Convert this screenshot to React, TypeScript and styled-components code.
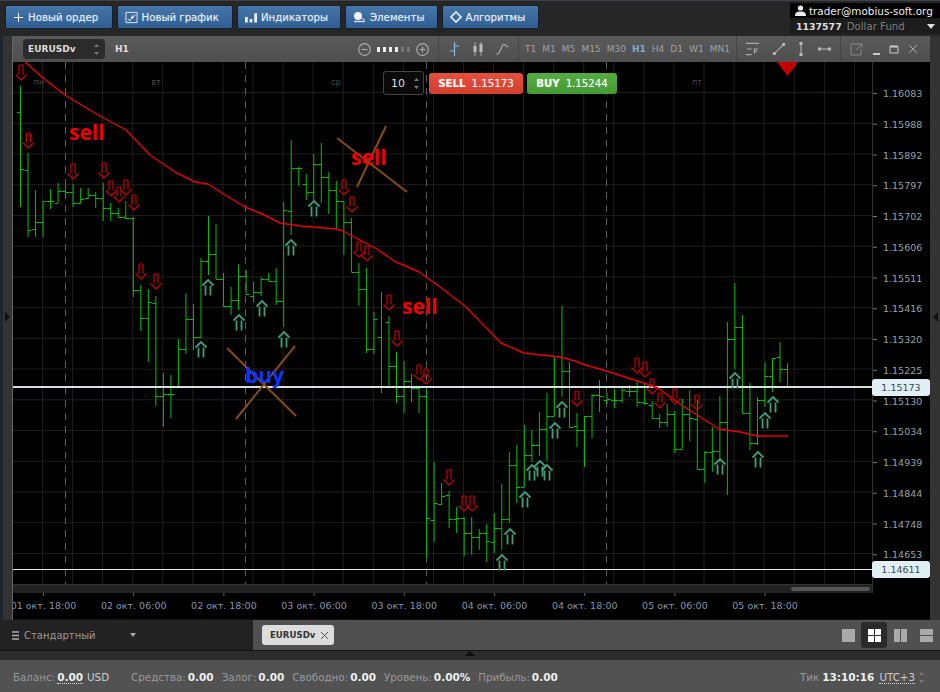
import styled, { createGlobalStyle } from 'styled-components';

const GlobalStyle = createGlobalStyle`
  html, body { margin: 0; padding: 0; background: #2a2a2a; }
  body { font-family: 'DejaVu Sans', Verdana, sans-serif; }
`;

// high, low, open, close in page pixels, one bar per hour
const BARS: [number, number, number, number][] = [
  [86, 207, 112, 169], [153, 237, 170, 230], [190, 237, 229, 222], [201, 237, 222, 201],
  [189, 209, 201, 201], [183, 203, 203, 191], [186, 198, 191, 192], [184, 207, 192, 203],
  [188, 204, 203, 199], [188, 199, 198, 195], [192, 208, 195, 198], [183, 221, 198, 208],
  [203, 221, 208, 213], [208, 217, 213, 217], [201, 219, 217, 218], [217, 297, 218, 290],
  [285, 331, 290, 318], [289, 362, 318, 302], [296, 406, 303, 396], [373, 427, 396, 394],
  [375, 418, 394, 394], [339, 387, 387, 349], [293, 354, 349, 319], [304, 350, 319, 337],
  [258, 337, 337, 261], [216, 275, 261, 254], [224, 279, 254, 279], [273, 307, 279, 306],
  [287, 315, 306, 300], [264, 310, 300, 276], [270, 295, 276, 294], [282, 302, 296, 292],
  [277, 296, 292, 279], [273, 281, 279, 281], [268, 305, 281, 301], [202, 327, 301, 210],
  [140, 235, 211, 168], [167, 186, 168, 168], [174, 200, 184, 192], [154, 202, 192, 164],
  [143, 203, 164, 177], [172, 214, 177, 190], [181, 229, 190, 201], [201, 255, 201, 222],
  [218, 272, 222, 272], [263, 306, 272, 289], [268, 353, 289, 349], [312, 354, 349, 319],
  [292, 393, 337, 386], [316, 387, 322, 366], [352, 403, 366, 396], [361, 413, 396, 381],
  [374, 402, 381, 388], [387, 413, 388, 396], [389, 558, 396, 518], [462, 542, 520, 503],
  [483, 505, 504, 496], [491, 528, 495, 519], [507, 533, 519, 518], [517, 556, 518, 533],
  [517, 555, 533, 537], [529, 550, 537, 533], [524, 562, 533, 541], [513, 553, 542, 528],
  [484, 550, 528, 519], [452, 523, 519, 465], [445, 503, 465, 487], [425, 487, 487, 455],
  [430, 462, 455, 445], [412, 456, 445, 429], [393, 461, 429, 416], [357, 416, 416, 386],
  [306, 397, 386, 371], [362, 427, 371, 427], [413, 447, 426, 430], [416, 467, 430, 416],
  [394, 438, 416, 395], [380, 412, 395, 396], [393, 404, 400, 399], [389, 408, 400, 400],
  [388, 403, 400, 390], [385, 397, 391, 391], [381, 407, 391, 402], [383, 405, 402, 403],
  [401, 418, 405, 418], [414, 428, 418, 422], [404, 427, 422, 414], [411, 453, 414, 449],
  [399, 449, 449, 414], [390, 441, 414, 418], [400, 469, 419, 469], [451, 483, 469, 452],
  [427, 472, 452, 451], [396, 462, 451, 422], [322, 495, 422, 339], [283, 369, 339, 327],
  [315, 413, 327, 413], [383, 450, 413, 443], [397, 445, 443, 400], [362, 407, 400, 376],
  [358, 392, 376, 358], [342, 382, 357, 369], [363, 387, 369, 387],
];

// x, y of the arrow tip
const SELL_ARROWS = [
  [21, 80], [28.5, 148], [73, 179], [104, 178], [111, 196], [119, 202], [126, 195], [134, 210],
  [141, 279], [156, 289], [344, 195], [352, 212], [359, 257], [367, 261], [389, 310], [397, 346],
  [419, 380], [426, 384], [449, 485], [464, 511], [472, 511], [577, 406], [637, 373], [645, 377],
  [652, 394], [660, 408], [675, 404], [697, 410],
];
const BUY_ARROWS = [
  [201, 342], [208, 280], [239, 315], [262, 301], [284, 332], [291, 240], [314, 201], [502, 555],
  [510, 529], [525, 492], [532, 465], [540, 461], [547, 465], [555, 423], [562, 402], [720, 459],
  [735, 373], [758, 452], [765, 413], [773, 397],
];

const MA_LINE =
  '25,62 43,78 65,95 73,100 100,116 126,130 150,155 175,172 195,182 208,184 225,195 245,207 262,214 280,223 300,226 336,229 343,231 375,248 396,262 419,272 440,287 465,306 501,343 524,353 560,357 575,361 585,365 600,369 650,385 658,388 680,404 697,415 719,429 740,432 757,436 788,436';

const PRICES = [
  '1.16083', '1.15988', '1.15892', '1.15797', '1.15702', '1.15606', '1.15511', '1.15416',
  '1.15320', '1.15225', '1.15130', '1.15034', '1.14939', '1.14844', '1.14748', '1.14653',
];

const TIMES = [
  '01 окт. 18:00', '02 окт. 06:00', '02 окт. 18:00', '03 окт. 06:00', '03 окт. 18:00',
  '04 окт. 06:00', '04 окт. 18:00', '05 окт. 06:00', '05 окт. 18:00',
];

const DAYS: [string, number][] = [['пн', 39], ['вт', 156], ['ср', 336], ['пт', 697]];
const DAY_LINES = [65.5, 245.5, 426.5, 606.5];
const TIMEFRAMES = ['T1', 'M1', 'M5', 'M15', 'M30', 'H1', 'H4', 'D1', 'W1', 'MN1'];

const Page = styled.div`
  width: 940px;
  height: 692px;
  overflow: hidden;
  display: flex;
  flex-direction: column;
  background: #2a2a2a;
`;

const TopBar = styled.header`
  height: 36px;
  flex: none;
  display: flex;
  gap: 4px;
  padding: 5px 0 0 5px;
  box-sizing: border-box;
  background: #262626;
  border-top: 1px solid #3c4248;
`;

const TopButton = styled.button<{ $w: number }>`
  width: ${(p) => p.$w}px;
  height: 24px;
  margin-top: -1px;
  padding: 0 0 0 7px;
  display: flex;
  align-items: center;
  gap: 4px;
  border: 1px solid #14202c;
  border-radius: 2px;
  background: linear-gradient(#4676a8, #2f5f92);
  color: #e6eef5;
  font: 10.2px 'DejaVu Sans', sans-serif;
  text-shadow: 0 0 1px rgba(255, 255, 255, 0.4);
`;

const Account = styled.div`
  margin: -3px 0 0 auto;
  width: 150px;
  height: 31px;
  background: #1c1c1c;
  display: flex;
  flex-direction: column;
`;

const AccountTop = styled.div`
  height: 15px;
  background: #000;
  display: flex;
  align-items: center;
  gap: 3px;
  padding-left: 5px;
  color: #eee;
  font-size: 10.4px;
`;

const AccountBottom = styled.div`
  flex: 1;
  display: flex;
  align-items: center;
  padding: 0 5px 0 6px;
  font-size: 10.2px;
  color: #7d7d7d;
`;

const AccountId = styled.b`
  color: #ddd;
  font-size: 9.4px;
  margin-right: 5px;
`;

const AccountCaret = styled.span`
  margin-left: auto;
  width: 0;
  height: 0;
  border-left: 4px solid transparent;
  border-right: 4px solid transparent;
  border-top: 5px solid #ddd;
`;

const Middle = styled.div`
  height: 584px;
  flex: none;
  display: flex;
`;

const Rail = styled.div<{ $w: number }>`
  width: ${(p) => p.$w}px;
  flex: none;
  background: #333;
  display: flex;
  align-items: center;
  justify-content: center;
  padding-bottom: 22px;
  box-sizing: border-box;
`;

const LeftRail = styled(Rail)`
  border-left: 3px solid #20262c;
  border-right: 1px solid #666;
`;

const RailArrow = styled.span<{ $dir: 'left' | 'right' }>`
  width: 0;
  height: 0;
  border-top: 5px solid transparent;
  border-bottom: 5px solid transparent;
  ${(p) => (p.$dir === 'right' ? 'border-left: 5px solid #111;' : 'border-right: 5px solid #111;')}
`;

const ChartColumn = styled.main`
  flex: 1;
  position: relative;
  display: flex;
  flex-direction: column;
  border-bottom: 1px solid #111;
`;

const ChartHeader = styled.div`
  height: 26px;
  flex: none;
  display: flex;
  background: linear-gradient(#5a5a5a, #4e4e4e);
  color: #aaa;
`;

const HeaderGroup = styled.div<{ $w: number }>`
  width: ${(p) => p.$w}px;
  flex: none;
  display: flex;
  align-items: center;
  box-sizing: border-box;
  & + & {
    border-left: 1px solid #444;
  }
`;

const SymbolSelect = styled.div`
  width: 82px;
  height: 20px;
  margin-left: 10px;
  box-sizing: border-box;
  padding: 0 5px;
  display: flex;
  align-items: center;
  justify-content: space-between;
  border-radius: 4px;
  background: #2b2b2b;
  color: #ddd;
  font-size: 9px;
  font-weight: 700;
`;

const Period = styled.span`
  margin-left: 10px;
  font-size: 9px;
  font-weight: 700;
  color: #ddd;
`;

const ZoomControls = styled.div`
  margin-left: auto;
  margin-right: 9px;
  display: flex;
  align-items: center;
  gap: 6px;
`;

const ZoomDots = styled.div`
  display: flex;
  gap: 3px;
`;

const ZoomDot = styled.span<{ $on: boolean }>`
  width: 3px;
  height: 5px;
  background: ${(p) => (p.$on ? '#eee' : '#777')};
`;

const Timeframe = styled.span<{ $active?: boolean }>`
  font-size: 9px;
  color: ${(p) => (p.$active ? '#7fa9dc' : '#a0a0a0')};
  font-weight: ${(p) => (p.$active ? 700 : 400)};
`;

const Timeframes = styled(HeaderGroup)`
  justify-content: space-between;
  padding: 0 6px;
`;

const IconGroup = styled(HeaderGroup)`
  justify-content: space-between;
  padding: 0 9px;
`;

const WindowGroup = styled(IconGroup)`
  padding: 0 12px 0 9px;
`;

const ChartSvg = styled.svg`
  display: block;
  width: 917px;
  height: 557px;
  background: #000;
`;

const PriceText = styled.text`
  font: 9.5px 'DejaVu Sans', sans-serif;
  fill: #96a2aa;
`;

const TimeText = styled.text`
  font: 9.5px 'DejaVu Sans', sans-serif;
  fill: #8196ad;
  text-anchor: middle;
`;

const DayText = styled.text`
  font: 8px 'DejaVu Sans', sans-serif;
  fill: #4c4c4c;
  text-anchor: middle;
`;

const Note = styled.span<{ $x: number; $y: number; $color: string }>`
  position: absolute;
  left: ${(p) => p.$x}px;
  top: ${(p) => p.$y}px;
  color: ${(p) => p.$color};
  font: 700 21px/24px 'Open Sans', sans-serif;
  pointer-events: none;
`;

const PriceTag = styled.div<{ $y: number }>`
  position: absolute;
  left: 859px;
  top: ${(p) => p.$y}px;
  width: 58px;
  height: 17px;
  display: flex;
  align-items: center;
  justify-content: center;
  border-radius: 3px;
  background: #e0eff4;
  color: #3a4a52;
  font-size: 9.5px;
`;

const OrderPanel = styled.div`
  position: absolute;
  left: 370px;
  top: 35px;
  display: flex;
  align-items: center;
  gap: 4px;
`;

const QtyBox = styled.div`
  width: 41px;
  height: 24px;
  margin-right: 1px;
  box-sizing: border-box;
  padding: 0 3px 0 7px;
  display: flex;
  align-items: center;
  justify-content: space-between;
  border: 1px solid #444;
  border-radius: 3px;
  background: #0a0a0a;
  color: #ddd;
  font-size: 11px;
`;

const TradeButton = styled.div<{ $w: number; $buy?: boolean }>`
  width: ${(p) => p.$w}px;
  height: 21px;
  display: flex;
  align-items: center;
  justify-content: center;
  gap: 6px;
  border-radius: 3px;
  background: ${(p) =>
    p.$buy ? 'linear-gradient(#55ad40, #459a34)' : 'linear-gradient(#e4503c, #d43f2e)'};
  color: #f4f4f4;
  font-size: 10.2px;
  font-weight: 400;
  text-shadow: 0 0 1px rgba(255, 255, 255, 0.5);
  b {
    font-weight: 700;
  }
`;

const TabBar = styled.div`
  height: 30px;
  flex: none;
  display: flex;
`;

const TemplateCell = styled.div`
  width: 253px;
  flex: none;
  display: flex;
  align-items: center;
  padding-left: 12px;
  box-sizing: border-box;
  background: #222;
  color: #999;
  font-size: 10px;
  gap: 5px;
`;

const TemplateCaret = styled.span`
  margin-left: 29px;
  width: 0;
  height: 0;
  border-left: 3.5px solid transparent;
  border-right: 3.5px solid transparent;
  border-top: 4px solid #aaa;
`;

const TabStrip = styled.div`
  flex: 1;
  display: flex;
  align-items: center;
  background: #505050;
  padding: 0 1px 0 9px;
`;

const TabChip = styled.div`
  width: 72px;
  height: 20px;
  box-sizing: border-box;
  padding: 0 5px 0 8px;
  display: flex;
  align-items: center;
  justify-content: space-between;
  border-radius: 3px;
  background: #dcdcdc;
  color: #333;
  font-size: 8.6px;
  font-weight: 700;
`;

const LayoutSwitch = styled.div`
  margin-left: auto;
  display: flex;
  align-items: center;
`;

const LayoutButton = styled.div<{ $active?: boolean }>`
  width: 26px;
  height: 26px;
  display: flex;
  align-items: center;
  justify-content: center;
  border-radius: 3px;
  background: ${(p) => (p.$active ? '#2a2a2a' : 'transparent')};
`;

const LayoutGrid = styled.div<{ $cols: number; $rows: number; $active?: boolean }>`
  width: 13px;
  height: 13px;
  display: grid;
  gap: 1px;
  grid-template-columns: repeat(${(p) => p.$cols}, 1fr);
  grid-template-rows: repeat(${(p) => p.$rows}, 1fr);
  i {
    background: ${(p) => (p.$active ? '#fff' : '#aaa')};
  }
`;

const Divider = styled.div`
  height: 10px;
  flex: none;
  background: #2c2c2c;
  border-top: 1px solid #111;
  box-sizing: border-box;
  display: flex;
  justify-content: center;
`;

const DividerArrow = styled.span`
  width: 0;
  height: 0;
  border-left: 5px solid transparent;
  border-right: 5px solid transparent;
  border-bottom: 5px solid #111;
`;

const StatusBar = styled.footer`
  flex: 1;
  display: flex;
  align-items: center;
  gap: 8px;
  padding: 2px 0 0 13px;
  background: #525252;
  font-size: 10.3px;
  color: #999;
`;

const StatusItem = styled.div<{ $after?: number }>`
  display: flex;
  align-items: baseline;
  gap: 2px;
  margin-right: ${(p) => p.$after ?? 0}px;
`;

const Value = styled.b`
  color: #eee;
  font-size: 10.5px;
`;

const Dotted = styled.span`
  border-bottom: 1px dotted #ddd;
`;

const Unit = styled.span`
  color: #ccc;
  margin-left: 2px;
`;

const StatusClock = styled(StatusItem)`
  margin-left: auto;
  padding-right: 15px;
  align-items: center;
  gap: 3px;
`;

function SellArrow({ x, y }: { x: number; y: number }) {
  return (
    <path
      d={`M${x - 2} ${y - 15}V${y - 5.5}M${x + 2} ${y - 15}V${y - 5.5}M${x - 2} ${y - 15}H${x + 2}M${x - 5.5} ${y - 5.5}L${x} ${y}L${x + 5.5} ${y - 5.5}`}
      fill="none"
      stroke="#d00000"
      strokeWidth="1.2"
    />
  );
}

function BuyArrow({ x, y }: { x: number; y: number }) {
  return (
    <path
      d={`M${x - 2.5} ${y + 15.5}V${y + 5.5}M${x + 2.5} ${y + 15.5}V${y + 5.5}M${x - 5.5} ${y + 5.5}L${x} ${y}L${x + 5.5} ${y + 5.5}`}
      fill="none"
      stroke="#3f9d7c"
      strokeWidth="1.8"
    />
  );
}

function Spinner() {
  return (
    <svg width="7" height="13" viewBox="0 0 7 13">
      <path d="M3.5 1L6 4H1zM3.5 12L1 9h5z" fill="#777" />
    </svg>
  );
}

function Chart() {
  const grid = '#1f1f1f';
  return (
    <ChartSvg viewBox="13 62 917 557">
      {Array.from({ length: 28 }, (_, i) => 42.5 + i * 30.07).map((x) => (
        <line key={x} x1={x} x2={x} y1={62} y2={585} stroke={grid} />
      ))}
      {Array.from({ length: 16 }, (_, i) => 92.5 + i * 30.73).map((y) => (
        <line key={y} x1={13} x2={872} y1={y} y2={y} stroke={grid} />
      ))}
      {DAY_LINES.map((x) => (
        <line key={x} x1={x} x2={x} y1={62} y2={585} stroke="#5c5c5c" strokeDasharray="7 6" />
      ))}
      {DAYS.map(([label, x]) => (
        <DayText key={label} x={x} y={85}>
          {label}
        </DayText>
      ))}

      {BARS.map(([high, low, open, close], i) => {
        const x = 20.5 + i * 7.52;
        return (
          <path
            key={i}
            d={`M${x} ${high}V${low}M${x - 3.5} ${open + 0.5}H${x}M${x} ${close + 0.5}H${x + 3.5}`}
            fill="none"
            stroke="#00c000"
          />
        );
      })}

      <line x1={13} x2={872} y1={387} y2={387} stroke="#d6e2e2" strokeWidth="2" />
      <line x1={13} x2={872} y1={569.5} y2={569.5} stroke="#e8e8e8" />

      <polyline points={MA_LINE} fill="none" stroke="#e60008" strokeWidth="1.4" strokeLinejoin="round" />
      {SELL_ARROWS.map(([x, y]) => (
        <SellArrow key={`${x}-${y}`} x={x} y={y} />
      ))}
      {BUY_ARROWS.map(([x, y]) => (
        <BuyArrow key={`${x}-${y}`} x={x} y={y} />
      ))}

      <g stroke="#8a4a16" strokeWidth="2">
        <line x1={337} y1={138} x2={407} y2={192} />
        <line x1={386} y1={126} x2={357} y2={187} />
        <line x1={227} y1={348} x2={296} y2={416} />
        <line x1={295} y1={346} x2={236} y2={419} />
      </g>
      <path d="M777 62h21l-10.5 14z" fill="#c40000" />

      <rect x={13} y={585} width={860} height={8} fill="#222" />
      <rect x={791} y={587} width={79} height={4} rx={2} fill="#555" />
      <line x1={13} x2={873} y1={584.5} y2={584.5} stroke="#333" />
      <line x1={872.5} x2={872.5} y1={62} y2={593} stroke="#333" />

      {PRICES.map((price, i) => {
        const y = 93.5 + i * 30.75;
        return (
          <g key={price}>
            <line x1={873} x2={877} y1={y} y2={y} stroke="#777" />
            <PriceText x={883} y={y + 3.5}>
              {price}
            </PriceText>
          </g>
        );
      })}
      {TIMES.map((time, i) => {
        const x = 43.5 + i * 90.2;
        return (
          <g key={time}>
            <line x1={x} x2={x} y1={593} y2={596} stroke="#666" />
            <TimeText x={x} y={609}>
              {time}
            </TimeText>
          </g>
        );
      })}
    </ChartSvg>
  );
}

const iconStroke = { fill: 'none', stroke: '#aaa', strokeWidth: 1.2 };

export default function App() {
  return (
    <Page>
      <GlobalStyle />
      <TopBar>
        <TopButton $w={107.5}>
          <svg width="11" height="11" viewBox="0 0 11 11">
            <path d="M5.5 1v9M1 5.5h9" stroke="#eef" />
          </svg>
          Новый ордер
        </TopButton>
        <TopButton $w={116.5}>
          <svg width="13" height="13" viewBox="0 0 14 13">
            <path d="M1 1h12v11H1z" fill="none" stroke="#e8eef4" />
            <path d="M3 8l2.5 2L8 4.5V8l3-5" fill="none" stroke="#e8eef4" />
          </svg>
          Новый график
        </TopButton>
        <TopButton $w={104}>
          <svg width="12" height="11" viewBox="0 0 13 11">
            <path d="M0 5h3v6H0zM5 7h3v4H5zM10 1h3v10h-3z" fill="#eef" />
          </svg>
          Индикаторы
        </TopButton>
        <TopButton $w={92.5}>
          <svg width="13" height="12" viewBox="0 0 13 12">
            <circle cx="5" cy="5" r="4" fill="#eef" />
            <path d="M1 10.5h11" stroke="#dde" strokeWidth="1.4" />
            <path d="M8 7l4 2" stroke="#dde" />
          </svg>
          Элементы
        </TopButton>
        <TopButton $w={97.5}>
          <svg width="12" height="12" viewBox="0 0 12 12">
            <path d="M6 1l5 5-5 5-5-5z" fill="none" stroke="#eef" strokeWidth="1.6" />
          </svg>
          Алгоритмы
        </TopButton>
        <Account>
          <AccountTop>
            <svg width="11" height="11" viewBox="0 0 11 11">
              <circle cx="5.5" cy="3" r="2.6" fill="#eee" />
              <path d="M0 11c0-3.5 2-4.5 5.500-4.500S11 7.500 11 11z" fill="#eee" />
            </svg>
            trader@mobius-soft.org
          </AccountTop>
          <AccountBottom>
            <AccountId>1137577</AccountId>
            Dollar Fund
            <AccountCaret />
          </AccountBottom>
        </Account>
      </TopBar>

      <Middle>
        <LeftRail $w={13}>
          <RailArrow $dir="right" />
        </LeftRail>
        <ChartColumn>
          <ChartHeader>
            <HeaderGroup $w={425}>
              <SymbolSelect>
                EURUSDv
                <Spinner />
              </SymbolSelect>
              <Period>H1</Period>
              <ZoomControls>
                <svg width="13" height="13" viewBox="0 0 13 13">
                  <circle cx="6.500" cy="6.500" r="5.800" {...iconStroke} />
                  <path d="M3.500 6.500h6" {...iconStroke} />
                </svg>
                <ZoomDots>
                  {[1, 1, 1, 1, 0, 0].map((on, i) => (
                    <ZoomDot key={i} $on={on === 1} />
                  ))}
                </ZoomDots>
                <svg width="13" height="13" viewBox="0 0 13 13">
                  <circle cx="6.500" cy="6.500" r="5.800" {...iconStroke} />
                  <path d="M3.500 6.500h6M6.500 3.500v6" {...iconStroke} />
                </svg>
              </ZoomControls>
            </HeaderGroup>
            <IconGroup $w={80}>
              <svg width="12" height="16" viewBox="0 0 12 16">
                <path d="M6.500 1v14M2 10h4.500M6.500 5H11" fill="none" stroke="#8db4dc" strokeWidth="1.2" />
              </svg>
              <svg width="12" height="16" viewBox="0 0 12 16">
                <path d="M3 1v14M9 1v14" stroke="#aaa" />
                <path d="M1.500 5h3v6h-3zM7.500 3h3v8h-3z" fill="#bbb" />
              </svg>
              <svg width="14" height="14" viewBox="0 0 14 14">
                <path d="M1 12h2.500L8 2.500h1.500L13 5" {...iconStroke} />
              </svg>
            </IconGroup>
            <Timeframes $w={218}>
              {TIMEFRAMES.map((tf) => (
                <Timeframe key={tf} $active={tf === 'H1'}>
                  {tf}
                </Timeframe>
              ))}
            </Timeframes>
            <IconGroup $w={104}>
              <svg width="14" height="14" viewBox="0 0 15 14">
                <path d="M0 1h14M1 7h5M0 13h6" {...iconStroke} />
                <path d="M9 12V7h4M9 9.500h3" {...iconStroke} />
              </svg>
              <svg width="12" height="12" viewBox="0 0 13 13">
                <path d="M2 11L11 2" {...iconStroke} />
                <path d="M0 10h3v3H0zM10 0h3v3h-3z" fill="#bbb" />
              </svg>
              <svg width="8" height="14" viewBox="0 0 8 14">
                <path d="M4 2v10" {...iconStroke} />
                <path d="M2.500 0h3v3h-3zM2.500 11h3v3h-3z" fill="#bbb" />
              </svg>
              <svg width="13" height="6" viewBox="0 0 13 6">
                <path d="M2 3h9" {...iconStroke} />
                <path d="M0 1.500h3v3H0zM10 1.500h3v3h-3z" fill="#bbb" />
              </svg>
            </IconGroup>
            <WindowGroup $w={90}>
              <svg width="13" height="13" viewBox="0 0 13 13">
                <path d="M9 1H1v11h10V6M6 7l6-6M8.500 1H12v3.500" fill="none" stroke="#888" />
              </svg>
              <svg width="9" height="13" viewBox="0 0 9 13">
                <path d="M1 11h7" stroke="#ccc" strokeWidth="2" />
              </svg>
              <svg width="10" height="13" viewBox="0 0 10 13">
                <path d="M1 3.500h8v6.500H1z" fill="none" stroke="#ccc" />
                <path d="M1 3.500h8" stroke="#ccc" strokeWidth="2" />
              </svg>
              <svg width="10" height="13" viewBox="0 0 10 13">
                <path d="M1 2l8 8M9 2l-8 8" stroke="#aaa" />
              </svg>
            </WindowGroup>
          </ChartHeader>

          <Chart />

          <Note $x={56} $y={84} $color="#f00000">sell</Note>
          <Note $x={338} $y={109} $color="#f00000">sell</Note>
          <Note $x={389} $y={258} $color="#f00000">sell</Note>
          <Note $x={232} $y={327} $color="#0a36ff">buy</Note>

          <OrderPanel>
            <QtyBox>
              10
              <Spinner />
            </QtyBox>
            <TradeButton $w={94}>
              <b>SELL</b>1.15173
            </TradeButton>
            <TradeButton $w={90} $buy>
              <b>BUY</b>1.15244
            </TradeButton>
          </OrderPanel>

          <PriceTag $y={343}>1.15173</PriceTag>
          <PriceTag $y={525}>1.14611</PriceTag>
        </ChartColumn>
        <Rail $w={10}>
          <RailArrow $dir="left" />
        </Rail>
      </Middle>

      <TabBar>
        <TemplateCell>
          <svg width="7" height="9" viewBox="0 0 7 9">
            <path d="M0 1h7M0 4.500h7M0 8h7" stroke="#aaa" strokeWidth="1.300" />
          </svg>
          Стандартный
          <TemplateCaret />
        </TemplateCell>
        <TabStrip>
          <TabChip>
            EURUSDv
            <svg width="9" height="9" viewBox="0 0 9 9">
              <path d="M1 1l7 7M8 1l-7 7" stroke="#555" />
            </svg>
          </TabChip>
          <LayoutSwitch>
            <LayoutButton>
              <LayoutGrid $cols={1} $rows={1}>
                <i />
              </LayoutGrid>
            </LayoutButton>
            <LayoutButton $active>
              <LayoutGrid $cols={2} $rows={2} $active>
                <i />
                <i />
                <i />
                <i />
              </LayoutGrid>
            </LayoutButton>
            <LayoutButton>
              <LayoutGrid $cols={2} $rows={1}>
                <i />
                <i />
              </LayoutGrid>
            </LayoutButton>
            <LayoutButton>
              <LayoutGrid $cols={1} $rows={2}>
                <i />
                <i />
              </LayoutGrid>
            </LayoutButton>
          </LayoutSwitch>
        </TabStrip>
      </TabBar>

      <Divider>
        <DividerArrow />
      </Divider>

      <StatusBar>
        <StatusItem $after={14}>
          Баланс:
          <Value>
            <Dotted>0.00</Dotted>
          </Value>
          <Unit>USD</Unit>
        </StatusItem>
        <StatusItem>
          Средства:
          <Value>0.00</Value>
        </StatusItem>
        <StatusItem>
          Залог:
          <Value>0.00</Value>
        </StatusItem>
        <StatusItem>
          Свободно:
          <Value>0.00</Value>
        </StatusItem>
        <StatusItem>
          Уровень:
          <Value>0.00%</Value>
        </StatusItem>
        <StatusItem>
          Прибыль:
          <Value>0.00</Value>
        </StatusItem>
        <StatusClock>
          Тик
          <Value>13:10:16</Value>
          <Unit>
            <Dotted>UTC+3</Dotted>
          </Unit>
          <Spinner />
        </StatusClock>
      </StatusBar>
    </Page>
  );
}
